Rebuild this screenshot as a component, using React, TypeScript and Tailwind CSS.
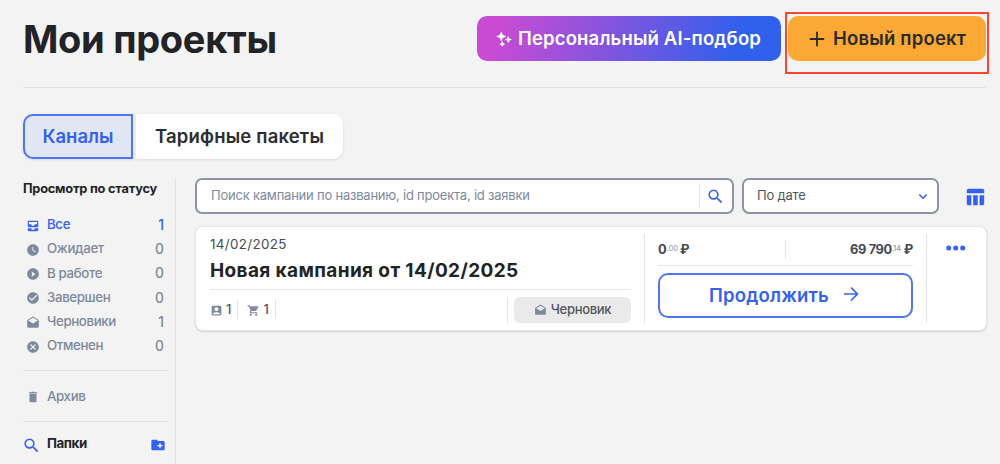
import {
  MdAccountBox,
  MdAllInbox,
  MdCancel,
  MdCheckCircle,
  MdCreateNewFolder,
  MdDelete,
  MdDrafts,
  MdPlayCircleFilled,
  MdSearch,
  MdShoppingCart,
  MdTableChart,
  MdWatchLater,
} from "react-icons/md";

const statuses = [
  { label: "Все", count: 1, icon: MdAllInbox, active: true },
  { label: "Ожидает", count: 0, icon: MdWatchLater },
  { label: "В работе", count: 0, icon: MdPlayCircleFilled },
  { label: "Завершен", count: 0, icon: MdCheckCircle },
  { label: "Черновики", count: 1, icon: MdDrafts },
  { label: "Отменен", count: 0, icon: MdCancel },
];

function Sparkles() {
  return (
    <svg width="16" height="16" viewBox="0 0 16 16" fill="currentColor" stroke="currentColor" strokeWidth="0.4">
      <path d="M5.3.8 6.7 4 10 5.4 6.7 6.8 5.3 10 3.9 6.8.6 5.4 3.9 4Z" />
      <path d="m12.3 5.4 1 2.2 2.2 1-2.2 1-1 2.2-1-2.2-2.2-1 2.2-1Z" />
      <path d="m6.3 10.6.8 1.7 1.7.8-1.7.8-.8 1.7-.8-1.7-1.7-.8 1.7-.8Z" />
    </svg>
  );
}

function Header() {
  return (
    <header className="relative flex h-[88px] justify-between border-b border-[#e1e2e3]">
      <h1 className="mt-[15px] h-12 text-[38px] leading-[48px] font-bold tracking-[-0.3px] whitespace-nowrap text-[#212327]">
        Мои проекты
      </h1>
      <div className="mt-4 flex h-[45px] gap-[7px] text-[18.5px] font-semibold whitespace-nowrap">
        <button className="flex w-[304px] items-center rounded-[10px] bg-[linear-gradient(105deg,#c94bd3_8%,#3060ec_85%)] pl-[19px] text-white">
          <Sparkles />
          <span className="ml-[6px] tracking-[0.16px]">Персональный AI-подбор</span>
        </button>
        <button className="flex w-[198px] items-center rounded-[10px] bg-[#fba934] pl-[21px] text-[#2b2b2b]">
          <svg width="16" height="16" viewBox="0 0 16 16" stroke="currentColor" strokeWidth="1.8">
            <path d="M8 .8v14.4M.8 8h14.4" />
          </svg>
          <span className="ml-2 tracking-[0.2px]">Новый проект</span>
        </button>
      </div>
      <div className="absolute top-3 -right-[3px] h-[62px] w-[204px] border-2 border-[#fd4530]" />
    </header>
  );
}

function Sidebar() {
  return (
    <aside className="flex h-[300px] w-[153px] shrink-0 flex-col border-r border-[#e0e1e3] pr-2 text-[13.3px] font-medium whitespace-nowrap text-[#7d899c]">
      <h2 className="mt-px h-5 text-[12.8px] leading-5 font-bold tracking-[-0.22px] text-[#212327]">
        Просмотр по статусу
      </h2>
      <ul className="mt-[14px]">
        {statuses.map(({ label, count, icon: Icon, active }) => (
          <li
            key={label}
            className={`flex h-[24.25px] items-center pr-[3px] pl-[3px] ${active ? "text-[#3461ee]" : ""}`}
          >
            <Icon size={14} className="mt-px" />
            <span className="ml-[7px] flex-1 tracking-[-0.38px]">{label}</span>
            <span className="text-[13.8px]">{count}</span>
          </li>
        ))}
      </ul>
      <div className="mt-[11.5px] flex h-[52px] items-center border-y border-[#e1e2e4] pl-[3px]">
        <MdDelete size={14} className="mt-[2px]" />
        <span className="mt-px ml-[7px] tracking-[-0.38px]">Архив</span>
      </div>
      <div className="flex h-11 items-center text-[#3461ee]">
        <MdSearch size={19} className="mt-[3px] -ml-px" />
        <span className="ml-[6px] flex-1 font-bold tracking-[-0.4px] text-[#212327]">Папки</span>
        <MdCreateNewFolder size={16} className="mt-[2px] mr-px" />
      </div>
    </aside>
  );
}

function Filters() {
  return (
    <div className="flex h-9 items-center">
      <div className="flex h-9 w-[539px] items-center rounded-[7px] border-2 border-[#8b95a6] bg-white pl-[14px]">
        <span className="flex-1 text-[13px] tracking-[-0.22px] whitespace-nowrap text-[#7d899c]">
          Поиск кампании по названию, id проекта, id заявки
        </span>
        <div className="h-6 w-px bg-[#e6e7e9]" />
        <MdSearch size={19} className="mr-[7px] ml-[6px] text-[#3461ee]" />
      </div>
      <div className="ml-2 flex h-9 w-[197px] items-center justify-between rounded-[7px] border-2 border-[#8b95a6] bg-white pr-[9px] pl-[13px]">
        <span className="text-[13px] tracking-[-0.2px] text-[#50565f]">По дате</span>
        <svg width="10" height="7" viewBox="0 0 10 7" fill="none" stroke="#3461ee" strokeWidth="1.6">
          <path d="M1.3 1.5 5 5.2l3.700-3.700" />
        </svg>
      </div>
      <MdTableChart size={22} className="mt-[2px] ml-[25px] text-[#3461ee]" />
    </div>
  );
}

function ProjectCard() {
  return (
    <article className="mt-3 flex h-[105px] w-[792px] rounded-lg border border-[#e5e6e8] bg-white px-[14px] pt-[7px] whitespace-nowrap shadow-[0_1px_2px_rgba(0,0,0,0.14)]">
      <div className="w-[421px]">
        <div className="mt-px h-[18px] text-[13.4px] leading-[18px] tracking-[0.35px] text-[#444a54]">14/02/2025</div>
        <h3 className="mt-[5px] h-[26px] text-[19px] leading-[26px] font-bold tracking-[0.38px] text-[#212327]">
          Новая кампания от 14/02/2025
        </h3>
        <div className="mt-[5px] flex h-[34px] items-center border-t border-[#e8e9ea] pt-[6px] text-[13px] font-medium text-[#50565f]">
          <MdAccountBox size={13} className="mt-[2px] text-[#7d899c]" />
          <span className="ml-[3px]">1</span>
          <div className="ml-[6px] h-[19px] w-px bg-[#e3e4e6]" />
          <MdShoppingCart size={13} className="mt-[2px] ml-[9px] text-[#7d899c]" />
          <span className="ml-[3px]">1</span>
          <div className="ml-[6px] h-[19px] w-px bg-[#e3e4e6]" />
          <div className="flex-1" />
          <div className="h-[26px] w-px bg-[#e3e4e6]" />
          <div className="ml-[6px] flex h-[26px] w-[117px] items-center justify-center gap-1 rounded-md bg-[#eaeaea]">
            <MdDrafts size={13} className="mt-px text-[#7d899c]" />
            <span className="tracking-[-0.3px]">Черновик</span>
          </div>
        </div>
      </div>
      <div className="ml-[13px] h-[89px] w-px bg-[#e3e4e6]" />
      <div className="ml-[13px] w-[255px]">
        <div className="flex h-8 items-center justify-between border-b border-[#e8e9ea] text-[12.8px] font-bold text-[#444a54]">
          <div className="w-[127px]">
            0<sup className="-top-[3px] text-[7.5px] font-normal text-[#8a919d]">.00</sup>
            <span className="ml-[2px]">₽</span>
          </div>
          <div className="h-[19px] w-px bg-[#e3e4e6]" />
          <div className="w-[127px] text-right tracking-[-0.35px]">
            69 790<sup className="-top-[3px] text-[8px] font-normal text-[#8a919d]">.14</sup>
            <span className="ml-[3px]">₽</span>
          </div>
        </div>
        <button className="mt-[7px] flex h-[45px] w-full items-center rounded-[10px] border-2 border-[#4f75f0] pl-[49px] text-[18.5px] font-semibold text-[#3461ee]">
          <span className="tracking-[0.2px]">Продолжить</span>
          <svg width="16" height="16" viewBox="0 0 16 16" fill="none" stroke="currentColor" strokeWidth="1.7" className="-mt-[3px] ml-[14px]">
            <path d="M1 8h13M8 1.5 14.5 8 8 14.5" />
          </svg>
        </button>
      </div>
      <div className="ml-[13px] h-[89px] w-px bg-[#e3e4e6]" />
      <svg width="20" height="6" viewBox="0 0 20 6" fill="#3461ee" className="mt-[11px] ml-[19px]">
        <circle cx="2.7" cy="3" r="2.5" />
        <circle cx="9.7" cy="3" r="2.5" />
        <circle cx="16.7" cy="3" r="2.5" />
      </svg>
    </article>
  );
}

export default function App() {
  return (
    <div className="h-[464px] w-[1000px] overflow-hidden bg-[#f3f3f3] pr-[14px] pl-[23px] font-['Inter',sans-serif]">
      <Header />
      <nav className="mt-[26px] flex h-[45px] gap-[3px] text-[18.5px] font-semibold whitespace-nowrap">
        <button className="w-[110px] rounded-l-[10px] border-2 border-[#4f75f0] bg-[#e1e6f5] text-[#3461ee] shadow-[0_1px_3px_rgba(0,0,0,0.1)]">
          Каналы
        </button>
        <button className="w-[207px] rounded-r-[10px] bg-white tracking-[0.18px] text-[#2b2d31] shadow-[0_1px_3px_rgba(0,0,0,0.1)]">
          Тарифные пакеты
        </button>
      </nav>
      <div className="mt-[19px] flex">
        <Sidebar />
        <main className="ml-[19px]">
          <Filters />
          <ProjectCard />
        </main>
      </div>
    </div>
  );
}
